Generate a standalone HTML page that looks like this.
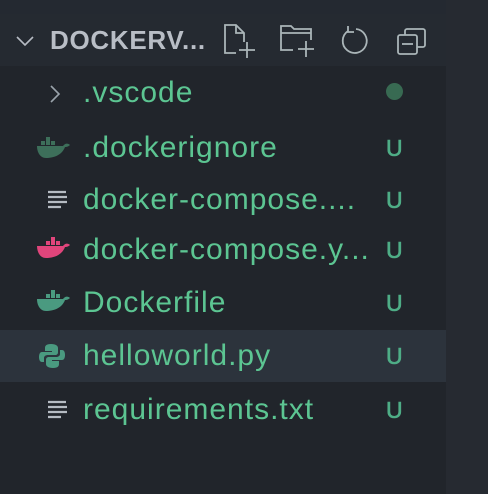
<!DOCTYPE html>
<html><head><style>
body{margin:0;width:488px;height:494px;background:#262a31;overflow:hidden;font-family:"Liberation Sans",sans-serif;position:relative}
#p{position:absolute;left:0;top:0;width:446px;height:494px;background:#21252b}
#top{position:absolute;left:0;top:0;width:446px;height:14px;background:#242931}
#hdr{position:absolute;left:0;top:14px;width:446px;height:52px;background:#252a31}
.row{position:absolute;left:0;width:446px;height:52px;color:#5cc592;font-size:30px;line-height:52px}
.row .t{position:absolute;left:83px;top:0;white-space:nowrap;letter-spacing:1px}
.row .u{position:absolute;left:386px;top:0;font-size:23px;color:#4fae87;-webkit-text-stroke:0.6px #4fae87}
.row svg{position:absolute}
.sel{background:#2c333c}
</style></head><body>
<div id="p"></div><div id="top"></div>
<div id="hdr">
<svg style="position:absolute;left:14px;top:16px" width="22" height="22" viewBox="0 0 22 22"><path d="M3 7 L11 15 L19 7" fill="none" stroke="#b7bcc4" stroke-width="1.6"/></svg>
<div style="position:absolute;left:50px;top:0;line-height:52px;font-size:26px;font-weight:bold;color:#b9bec6;letter-spacing:0.7px">DOCKERV...</div>
<svg style="position:absolute;left:222px;top:9px" width="38" height="36" viewBox="0 0 38 36" fill="none" stroke="#aab5b8" stroke-width="1.8"><path d="M14 30 H3 V2 H14 L22 10 V19 M14 2 V10 H22"/><path d="M25 19 V35 M17 27 H33" /></svg>
<svg style="position:absolute;left:278px;top:9px" width="40" height="36" viewBox="0 0 40 36" fill="none" stroke="#aab5b8" stroke-width="1.8"><path d="M15 27 H3 V3 H13 L16 6 H33 V17 M3 10 H33"/><path d="M28 18 V34 M20 26 H36"/></svg>
<svg style="position:absolute;left:338px;top:11px" width="32" height="32" viewBox="0 0 32 32" fill="none" stroke="#aab5b8" stroke-width="1.8"><path d="M10 6 A12 12 0 1 0 18 4"/><path d="M10 1 V7 H16"/></svg>
<svg style="position:absolute;left:396px;top:12px" width="32" height="32" viewBox="0 0 32 32" fill="none" stroke="#aab5b8" stroke-width="1.8"><rect x="2" y="9" width="19" height="19" rx="2"/><path d="M9 9 V5 A2 2 0 0 1 11 3 H27 A2 2 0 0 1 29 5 V19 A2 2 0 0 1 27 21 H21"/><path d="M6 18 H17"/></svg>
</div>
<div class="row" style="top:67px"><svg style="left:48px;top:17px" width="14" height="20" viewBox="0 0 14 20"><path d="M3 2 L11 10 L3 18" fill="none" stroke="#9aa3ab" stroke-width="1.6"/></svg><span class="t">.vscode</span><span style="position:absolute;left:386px;top:16px;width:17px;height:17px;border-radius:50%;background:#386a52"></span></div>
<div class="row" style="top:122px"><svg style="left:36px;top:13px" width="36" height="24" viewBox="0 0 36 24"><g fill="#3d6f5a"><rect x="10" y="2" width="4" height="4"/><rect x="5" y="6" width="4" height="4"/><rect x="10" y="6" width="4" height="4"/><rect x="15" y="6" width="4" height="4"/><path d="M1 11 H27 C29 8 32 8 34 10 C32 12 30 12 29 12 C26 20 18 23 10 23 C4 23 1 17 1 11Z"/></g></svg><span class="t">.dockerignore</span><span class="u">U</span></div>
<div class="row" style="top:174px"><svg style="left:47px;top:15px" width="22" height="22" viewBox="0 0 22 22" stroke="#b6bcc3" stroke-width="2.2"><path d="M1 3 H19 M1 8 H20 M1 13 H20 M1 18 H14"/></svg><span class="t">docker-compose....</span><span class="u">U</span></div>
<div class="row" style="top:224px"><svg style="left:36px;top:13px" width="36" height="24" viewBox="0 0 36 24"><g fill="#e0457b"><rect x="15" y="0" width="4" height="4"/><rect x="10" y="4" width="4" height="4"/><rect x="15" y="4" width="4" height="4"/><rect x="20" y="4" width="4" height="4"/><path d="M1 9 H27 C29 6 32 6 34 8 C32 10 30 10 29 10 C26 18 18 21 10 21 C4 21 1 15 1 9Z"/></g></svg><span class="t">docker-compose.y...</span><span class="u">U</span></div>
<div class="row" style="top:277px"><svg style="left:36px;top:12px" width="36" height="24" viewBox="0 0 36 24"><g fill="#4a9a80"><rect x="15" y="1" width="4" height="4"/><rect x="10" y="5" width="4" height="4"/><rect x="15" y="5" width="4" height="4"/><rect x="20" y="5" width="4" height="4"/><path d="M1 10 H27 C29 7 32 7 34 9 C32 11 30 11 29 11 C26 19 18 22 10 22 C4 22 1 16 1 10Z"/></g></svg><span class="t">Dockerfile</span><span class="u">U</span></div>
<div class="row sel" style="top:330px"><svg style="left:39px;top:13px" width="26" height="26" viewBox="0 0 26 26"><g fill="#4a9a80"><path d="M12 1 C7 1 6 3 6 5 V8 H13 V9 H3 C1 9 0 11 0 14 C0 17 1 19 3 19 H5 V15 C5 13 7 12 9 12 H16 C18 12 19 11 19 9 V5 C19 3 17 1 12 1Z"/><path d="M14 25 C19 25 20 23 20 21 V18 H13 V17 H23 C25 17 26 15 26 12 C26 9 25 7 23 7 H21 V11 C21 13 19 14 17 14 H10 C8 14 7 15 7 17 V21 C7 23 9 25 14 25Z"/></g></svg><span class="t">helloworld.py</span><span class="u">U</span></div>
<div class="row" style="top:384px"><svg style="left:47px;top:15px" width="22" height="22" viewBox="0 0 22 22" stroke="#b6bcc3" stroke-width="2.2"><path d="M1 3 H19 M1 8 H20 M1 13 H20 M1 18 H14"/></svg><span class="t">requirements.txt</span><span class="u">U</span></div>
</body></html>
